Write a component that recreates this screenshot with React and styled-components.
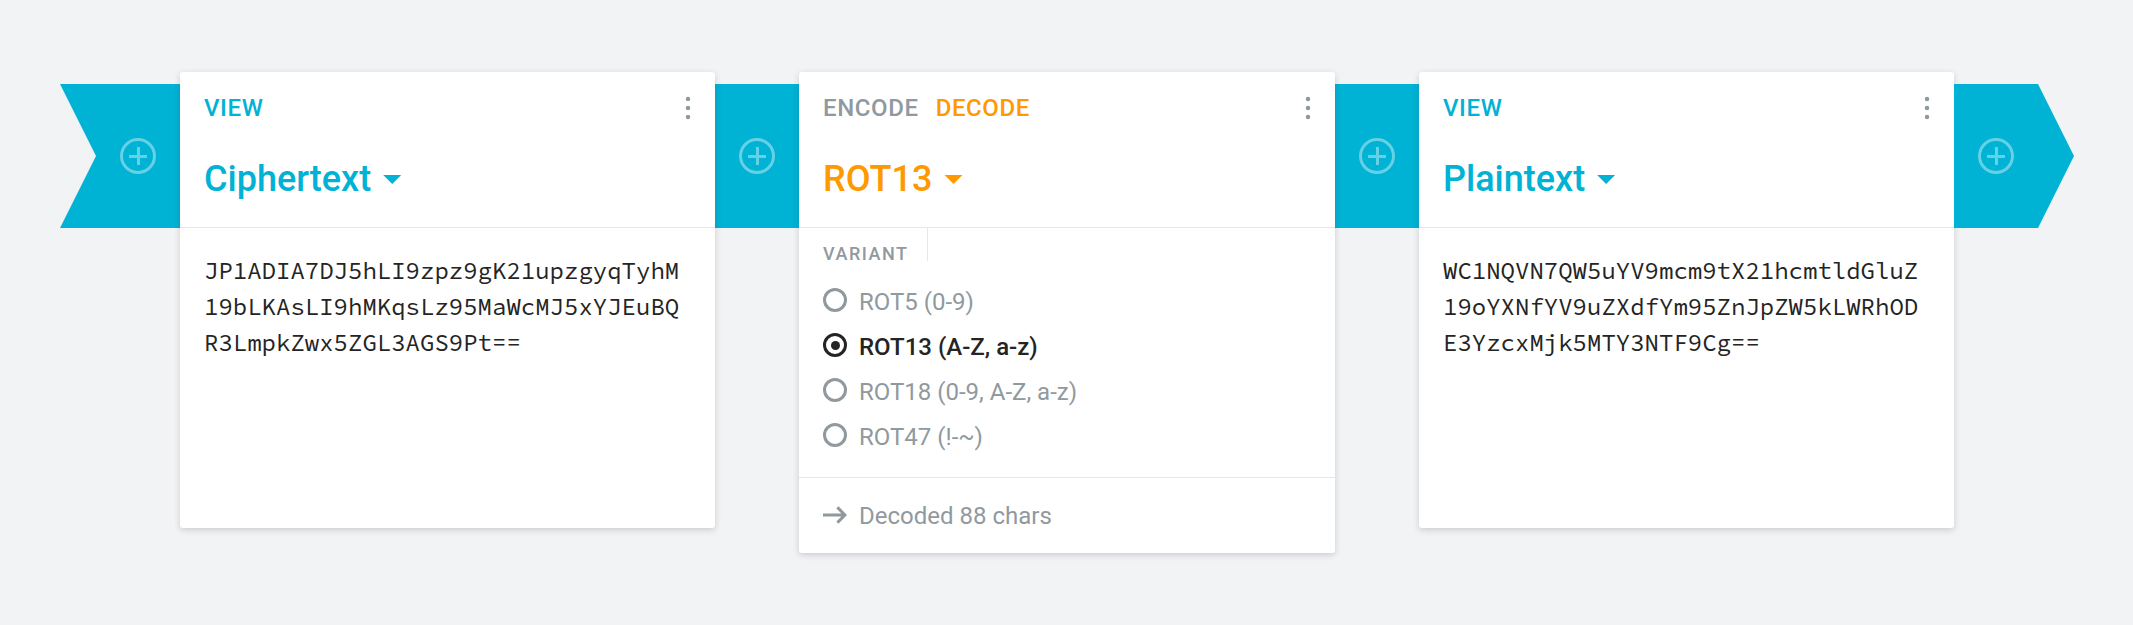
import React from 'react';
import styled, { createGlobalStyle } from 'styled-components';

const colors = {
  page: '#f2f3f5',
  cyan: '#00b2d4',
  orange: '#ff9900',
  grey: '#90999e',
  ink: '#242424',
  line: '#e4e6e8',
};

const GlobalStyle = createGlobalStyle`
  * { box-sizing: border-box; }
  body {
    margin: 0;
    background: ${colors.page};
    font-family: Roboto, "Liberation Sans", sans-serif;
    color: ${colors.ink};
  }
`;

const Pipeline = styled.main`
  display: flex;
  align-items: flex-start;
  width: 2133px;
  height: 625px;
  padding: 72px 59px 0 60px;
`;

const shapes = {
  start: 'polygon(0 0, 100% 0, 100% 100%, 0 100%, 36px 50%)',
  end: 'polygon(0 0, 84px 0, 100% 50%, 84px 100%, 0 100%)',
};

const Connector = styled.div`
  display: flex;
  align-items: center;
  justify-content: ${p => (p.$shape === 'start' ? 'flex-end' : 'flex-start')};
  flex: none;
  width: ${p => (p.$shape ? 120 : 84)}px;
  height: 144px;
  margin-top: 12px;
  padding: 0 24px;
  background: ${colors.cyan};
  clip-path: ${p => shapes[p.$shape] || 'none'};
`;

const AddButton = styled.button`
  display: block;
  width: 36px;
  height: 36px;
  padding: 0;
  border: 0;
  background: none;
  color: rgba(255, 255, 255, 0.4);

  svg { display: block; }
`;

const Card = styled.section`
  position: relative;
  flex: none;
  width: ${p => p.$width || 535}px;
  height: ${p => p.$height}px;
  border-radius: 3px;
  background: #fff;
  box-shadow: 0 2px 6px rgba(40, 50, 60, 0.2);
`;

const CardHeader = styled.header`
  height: 156px;
  padding: 24px 24px 0;
  border-bottom: 1px solid ${colors.line};
`;

const ModeBar = styled.div`
  display: flex;
  align-items: center;
  height: 24px;
  gap: 17px;
`;

const Mode = styled.span`
  font-size: 24px;
  font-weight: 500;
  line-height: 24px;
  letter-spacing: 0.6px;
  color: ${p => p.$color};
`;

const MenuButton = styled.button`
  display: block;
  width: 6px;
  height: 24px;
  margin: 0 0 0 auto;
  padding: 0;
  border: 0;
  background: none;
  color: ${colors.grey};

  svg { display: block; }
`;

const Title = styled.h2`
  display: flex;
  align-items: center;
  gap: 12px;
  height: 42px;
  margin: 38px 0 0;
  font-size: 36px;
  font-weight: 500;
  line-height: 42px;
  color: ${p => p.$color};
`;

const Caret = styled.span`
  width: 18px;
  height: 9px;
  margin-top: 1px;
  background: currentColor;
  clip-path: polygon(0 0, 100% 0, 50% 100%);
`;

const Content = styled.p`
  margin: 0;
  padding: 25px 24px 0;
  font: 400 24px/36px "Source Code Pro", "Liberation Mono", monospace;
  white-space: pre;
`;

const FieldLabel = styled.div`
  width: 129px;
  height: 33px;
  padding: 15px 0 0 24px;
  border-right: 1px solid ${colors.line};
  font-size: 18px;
  font-weight: 500;
  line-height: 21px;
  letter-spacing: 1.5px;
  color: ${colors.grey};
`;

const OptionList = styled.div`
  height: 216px;
  padding: 16.5px 24px 0;
`;

const Option = styled.div`
  display: flex;
  align-items: center;
  gap: 12px;
  height: 45px;
  font-size: 24px;
  font-weight: ${p => (p.$selected ? 500 : 400)};
  line-height: 30px;
  color: ${p => (p.$selected ? colors.ink : colors.grey)};
`;

const OptionText = styled.span`
  padding-top: 4px;
`;

const Radio = styled.span`
  display: flex;
  align-items: center;
  justify-content: center;
  width: 24px;
  height: 24px;
  border: 3px solid currentColor;
  border-radius: 50%;

  &::after {
    content: '';
    display: ${p => (p.$selected ? 'block' : 'none')};
    width: 9px;
    height: 9px;
    border-radius: 50%;
    background: currentColor;
  }
`;

const CardFooter = styled.footer`
  display: flex;
  align-items: center;
  gap: 12px;
  height: 76px;
  padding: 0 24px 1px;
  border-top: 1px solid ${colors.line};
  font-size: 24px;
  line-height: 30px;
  color: ${colors.grey};
`;

const StatusText = styled.span`
  padding-top: 2px;
`;

function Add() {
  return (
    <AddButton aria-label="Add">
      <svg width="36" height="36" viewBox="0 0 36 36" fill="none" stroke="currentColor" strokeWidth="3">
        <circle cx="18" cy="18" r="16.5" />
        <path d="M9 18.5H27M18.5 9V27" />
      </svg>
    </AddButton>
  );
}

function Header({ modes, title, color }) {
  return (
    <CardHeader>
      <ModeBar>
        {modes.map(m => (
          <Mode key={m.label} $color={m.active ? color : colors.grey}>{m.label}</Mode>
        ))}
        <MenuButton aria-label="Menu">
          <svg width="6" height="24" viewBox="0 0 6 24" fill="currentColor">
            <circle cx="3" cy="3" r="2.25" />
            <circle cx="3" cy="12" r="2.25" />
            <circle cx="3" cy="21" r="2.25" />
          </svg>
        </MenuButton>
      </ModeBar>
      <Title $color={color}>{title}<Caret /></Title>
    </CardHeader>
  );
}

const viewMode = [{ label: 'VIEW', active: true }];
const codeModes = [{ label: 'ENCODE' }, { label: 'DECODE', active: true }];
const variants = ['ROT5 (0-9)', 'ROT13 (A-Z, a-z)', 'ROT18 (0-9, A-Z, a-z)', 'ROT47 (!-~)'];
const cipherLines = [
  'JP1ADIA7DJ5hLI9zpz9gK21upzgyqTyhM',
  '19bLKAsLI9hMKqsLz95MaWcMJ5xYJEuBQ',
  'R3LmpkZwx5ZGL3AGS9Pt==',
];
const plainLines = [
  'WC1NQVN7QW5uYV9mcm9tX21hcmtldGluZ',
  '19oYXNfYV9uZXdfYm95ZnJpZW5kLWRhOD',
  'E3YzcxMjk5MTY3NTF9Cg==',
];

export default function App() {
  return (
    <>
      <GlobalStyle />
      <Pipeline>
        <Connector $shape="start"><Add /></Connector>
        <Card $height={456}>
          <Header modes={viewMode} title="Ciphertext" color={colors.cyan} />
          <Content>{cipherLines.join('\n')}</Content>
        </Card>
        <Connector><Add /></Connector>
        <Card $width={536} $height={481}>
          <Header modes={codeModes} title="ROT13" color={colors.orange} />
          <FieldLabel>VARIANT</FieldLabel>
          <OptionList>
            {variants.map((name, i) => (
              <Option key={name} $selected={i === 1}>
                <Radio $selected={i === 1} />
                <OptionText>{name}</OptionText>
              </Option>
            ))}
          </OptionList>
          <CardFooter>
            <svg width="24" height="18" viewBox="0 0 24 18" fill="none" stroke="currentColor" strokeWidth="3">
              <path d="M0 9H22M14.4 1.4L22 9L14.4 16.6" />
            </svg>
            <StatusText>Decoded 88 chars</StatusText>
          </CardFooter>
        </Card>
        <Connector><Add /></Connector>
        <Card $height={456}>
          <Header modes={viewMode} title="Plaintext" color={colors.cyan} />
          <Content>{plainLines.join('\n')}</Content>
        </Card>
        <Connector $shape="end"><Add /></Connector>
      </Pipeline>
    </>
  );
}
